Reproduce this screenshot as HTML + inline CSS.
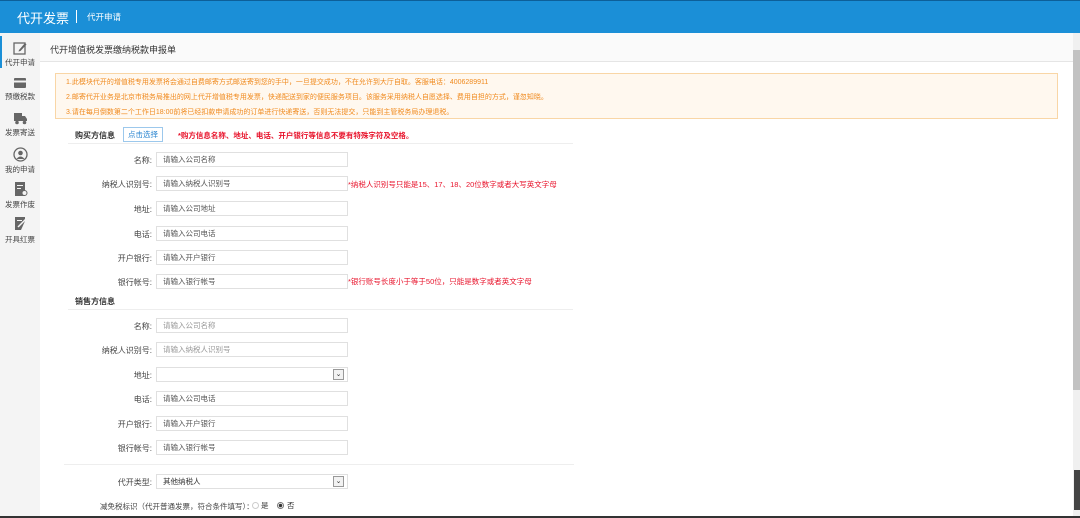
<!DOCTYPE html>
<html><head><meta charset="utf-8"><style>
*{margin:0;padding:0;box-sizing:border-box}
body{width:1080px;height:518px;overflow:hidden;background:#fff;font-family:"Liberation Sans","Noto Sans CJK SC",sans-serif;font-size:8px;color:#333;position:relative}
.a{position:absolute;white-space:nowrap}
.hdr{left:0;top:0;width:1080px;height:33px;background:#1b8fd7;border-top:1px solid #0d5f99}
.side{left:0;top:33px;width:40px;height:485px;background:#f4f4f4}
.si{position:absolute;left:0;width:40px;text-align:center;font-size:7.5px;color:#444}
.si svg{display:block;margin:0 auto 2px}
.lbl{text-align:right;width:100px;left:52px;font-size:8px;color:#444}
.inp{left:156px;width:192px;height:15px;border:1px solid #e0e0e0;background:#fff;font-size:7.5px;color:#555;padding-left:6px;line-height:13px}
.red{color:#e8142c;font-size:7.5px}
</style></head><body>
<div class="a hdr"></div>
<div class="a" style="left:17px;top:8px;color:#fff;font-size:13px">代开发票</div>
<div class="a" style="left:76px;top:10px;width:1px;height:13px;background:#fff"></div>
<div class="a" style="left:87px;top:11px;color:#fff;font-size:8.5px">代开申请</div>
<div class="a side"></div>
<div class="a" style="left:0;top:36px;width:2px;height:32px;background:#1b8fd7"></div>
<div class="si" style="top:41px"><svg width="14" height="14" viewBox="0 0 14 14"><rect x="1" y="2" width="11" height="11" fill="none" stroke="#666" stroke-width="1.3"/><path d="M6 9 L12 2 L13.5 3.5 L7.5 10 L5.5 10.5Z" fill="#666"/></svg>代开申请</div>
<div class="si" style="top:77px"><svg width="14" height="12" viewBox="0 0 14 12"><rect x="1" y="1" width="12" height="10" rx="1" fill="#666"/><rect x="1" y="3.5" width="12" height="2" fill="#f4f4f4"/></svg>预缴税款</div>
<div class="si" style="top:112px"><svg width="15" height="13" viewBox="0 0 15 13"><rect x="1" y="1" width="8" height="8" fill="#666"/><path d="M9 4 H12 L14 7 V9 H9Z" fill="#666"/><circle cx="4" cy="10.5" r="1.8" fill="#666"/><circle cx="11.5" cy="10.5" r="1.8" fill="#666"/></svg>发票寄送</div>
<div class="si" style="top:147px"><svg width="15" height="15" viewBox="0 0 15 15"><circle cx="7.5" cy="7.5" r="6.5" fill="none" stroke="#666" stroke-width="1.3"/><circle cx="7.5" cy="6" r="2.3" fill="#666"/><path d="M3.5 12 Q7.5 7 11.5 12Z" fill="#666"/></svg>我的申请</div>
<div class="si" style="top:181px"><svg width="15" height="16" viewBox="0 0 15 16"><rect x="2" y="1" width="10" height="14" fill="#666"/><rect x="4" y="4" width="6" height="1" fill="#f4f4f4"/><rect x="4" y="7" width="4" height="1" fill="#f4f4f4"/><circle cx="11.5" cy="12" r="2.5" fill="#f4f4f4" stroke="#666"/></svg>发票作废</div>
<div class="si" style="top:216px"><svg width="15" height="16" viewBox="0 0 15 16"><path d="M2 1 H12 V5 L8 14 H2Z" fill="#666"/><path d="M5 11 L13 3" stroke="#f4f4f4" stroke-width="1.5"/><rect x="4" y="4" width="5" height="1" fill="#f4f4f4"/></svg>开具红票</div>

<div class="a" style="left:40px;top:33px;width:1033px;height:29px;background:#fafafa;border-bottom:1px solid #e5e5e5"></div>
<div class="a" style="left:50px;top:43px;font-size:9px;color:#333">代开增值税发票缴纳税款申报单</div>

<div class="a" style="left:55px;top:73px;width:1003px;height:46px;background:#fff8ef;border:1px solid #f9d6a6"></div>
<div class="a" style="left:66px;top:75px;color:#f08a1e;font-size:7px;line-height:15px">1.此模块代开的增值税专用发票将会通过自费邮寄方式邮送寄到您的手中，一旦提交成功，不在允许到大厅自取。客服电话：4006289911<br>2.邮寄代开业务是北京市税务局推出的网上代开增值税专用发票，快递配送到家的便民服务项目。该服务采用纳税人自愿选择、费用自担的方式，谨忽知晓。<br>3.请在每月倒数第二个工作日18:00前将已经扣款申请成功的订单进行快递寄送，否则无法提交，只能到主管税务局办理退税。</div>

<div class="a" style="left:75px;top:130px;font-weight:bold;font-size:8px">购买方信息</div>
<div class="a" style="left:123px;top:127px;width:40px;height:15px;border:1px solid #9cc8ec;color:#2a85d0;font-size:7.5px;text-align:center;line-height:13px">点击选择</div>
<div class="a red" style="left:178px;top:130px;font-weight:bold">*购方信息名称、地址、电话、开户银行等信息不要有特殊字符及空格。</div>
<div class="a" style="left:68px;top:143px;width:505px;height:1px;background:#eee"></div>

<div class="a lbl" style="top:155px">名称:</div><div class="a inp" style="top:152px">请输入公司名称</div>
<div class="a lbl" style="top:179px">纳税人识别号:</div><div class="a inp" style="top:176px">请输入纳税人识别号</div>
<div class="a red" style="left:348px;top:179px">*纳税人识别号只能是15、17、18、20位数字或者大写英文字母</div>
<div class="a lbl" style="top:204px">地址:</div><div class="a inp" style="top:201px">请输入公司地址</div>
<div class="a lbl" style="top:229px">电话:</div><div class="a inp" style="top:226px">请输入公司电话</div>
<div class="a lbl" style="top:253px">开户银行:</div><div class="a inp" style="top:250px">请输入开户银行</div>
<div class="a lbl" style="top:277px">银行帐号:</div><div class="a inp" style="top:274px">请输入银行帐号</div>
<div class="a red" style="left:348px;top:276px">*银行账号长度小于等于50位，只能是数字或者英文字母</div>

<div class="a" style="left:75px;top:296px;font-weight:bold;font-size:8px">销售方信息</div>
<div class="a" style="left:68px;top:309px;width:505px;height:1px;background:#eee"></div>

<div class="a lbl" style="top:321px">名称:</div><div class="a inp" style="top:318px;color:#999">请输入公司名称</div>
<div class="a lbl" style="top:345px">纳税人识别号:</div><div class="a inp" style="top:342px;color:#999">请输入纳税人识别号</div>
<div class="a lbl" style="top:370px">地址:</div><div class="a inp" style="top:367px"></div>
<div class="a" style="left:333px;top:369px;width:11px;height:11px;border:1px solid #999;background:#f2f2f2;font-size:7px;text-align:center;line-height:9px">&#8964;</div>
<div class="a lbl" style="top:394px">电话:</div><div class="a inp" style="top:391px">请输入公司电话</div>
<div class="a lbl" style="top:419px">开户银行:</div><div class="a inp" style="top:416px">请输入开户银行</div>
<div class="a lbl" style="top:443px">银行帐号:</div><div class="a inp" style="top:440px">请输入银行帐号</div>

<div class="a" style="left:64px;top:464px;width:510px;height:1px;background:#eee"></div>
<div class="a lbl" style="top:477px">代开类型:</div><div class="a inp" style="top:474px;color:#333">其他纳税人</div>
<div class="a" style="left:333px;top:476px;width:11px;height:11px;border:1px solid #999;background:#f2f2f2;font-size:7px;text-align:center;line-height:9px">&#8964;</div>
<div class="a" style="left:100px;top:501px;font-size:7.5px;color:#444">减免税标识（代开普通发票，符合条件填写）：</div>
<div class="a" style="left:252px;top:502px;width:7px;height:7px;border:1px solid #ccc;border-radius:50%"></div>
<div class="a" style="left:261px;top:500px;font-size:7.5px">是</div>
<div class="a" style="left:277px;top:502px;width:7px;height:7px;border:1px solid #777;border-radius:50%;background:radial-gradient(#333 1.5px,#fff 2px)"></div>
<div class="a" style="left:287px;top:500px;font-size:7.5px">否</div>

<div class="a" style="left:1073px;top:33px;width:7px;height:485px;background:#f0f0f0"></div>
<div class="a" style="left:1073px;top:50px;width:7px;height:340px;background:#c2c2c2"></div>
<div class="a" style="left:1074px;top:470px;width:6px;height:40px;background:#444"></div>
<div class="a" style="left:0;top:516px;width:1080px;height:2px;background:#333"></div>
</body></html>
